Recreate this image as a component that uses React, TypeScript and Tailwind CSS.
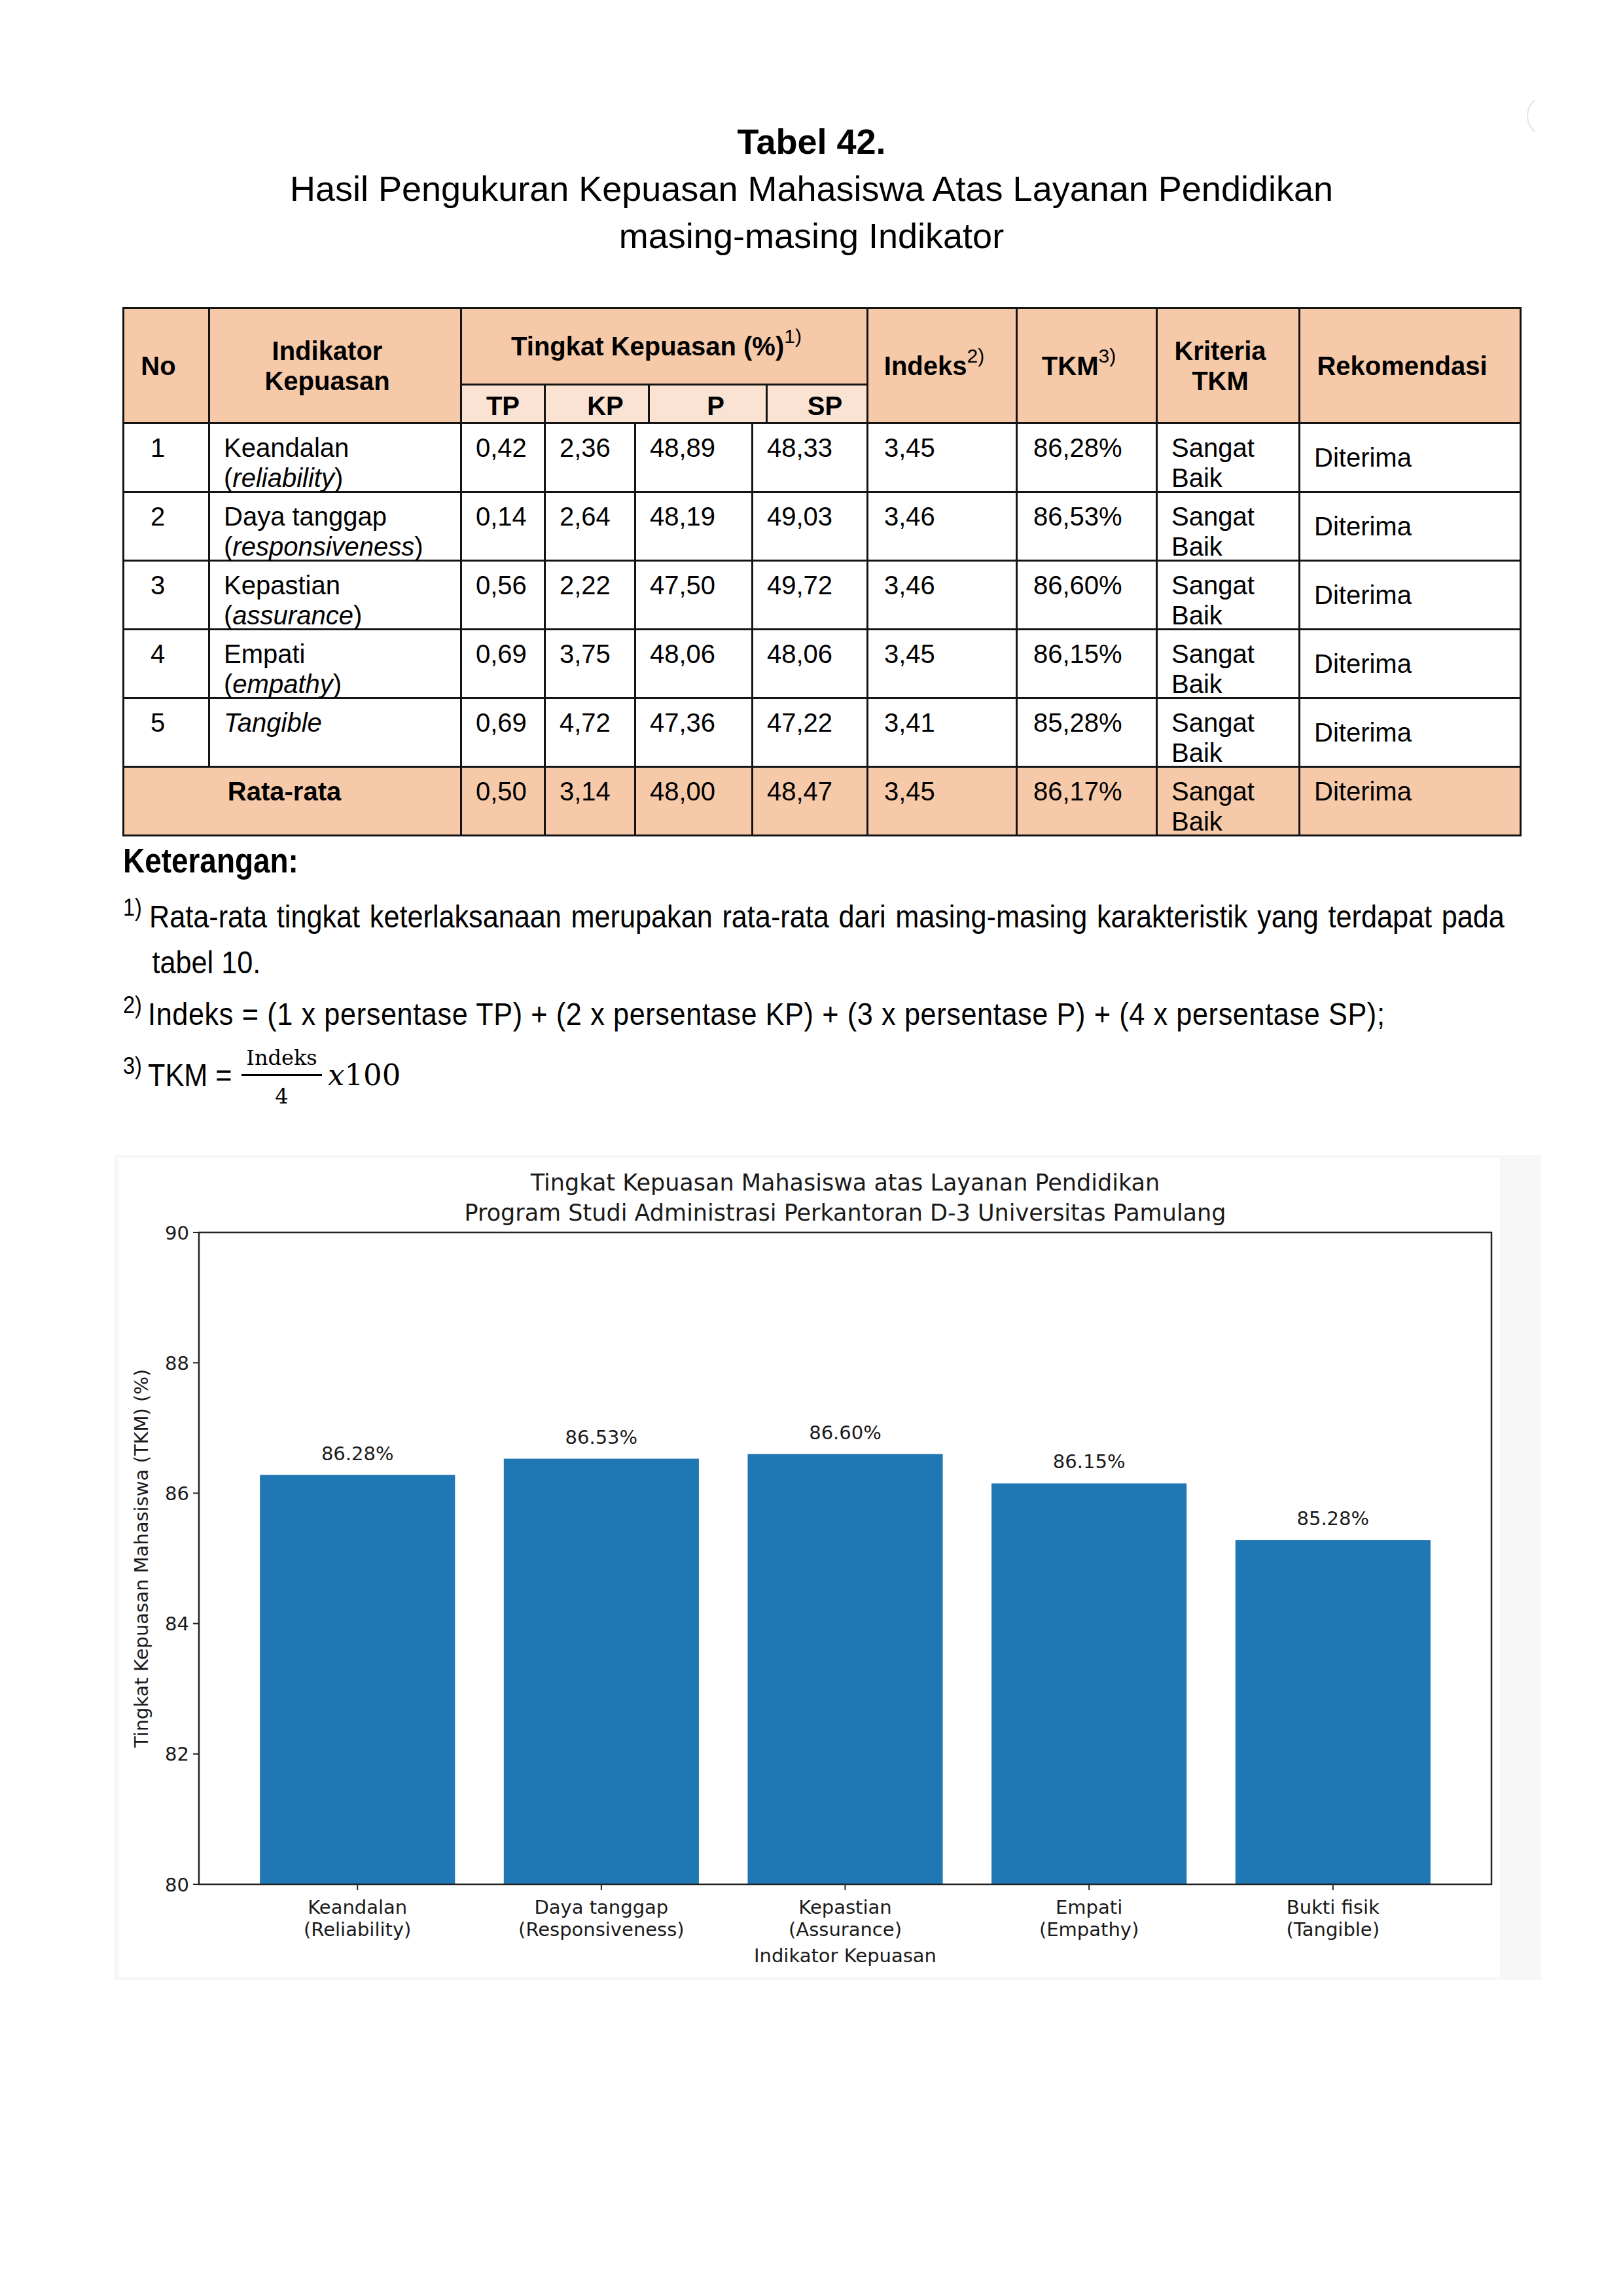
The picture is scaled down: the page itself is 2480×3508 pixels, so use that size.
import React from "react";

type Row = {
  no: string;
  name?: string;
  en: string;
  vals: string[];
  idx: string;
  tkm: string;
};

const rows: Row[] = [
  { no: "1", name: "Keandalan", en: "reliability", vals: ["0,42", "2,36", "48,89", "48,33"], idx: "3,45", tkm: "86,28%" },
  { no: "2", name: "Daya tanggap", en: "responsiveness", vals: ["0,14", "2,64", "48,19", "49,03"], idx: "3,46", tkm: "86,53%" },
  { no: "3", name: "Kepastian", en: "assurance", vals: ["0,56", "2,22", "47,50", "49,72"], idx: "3,46", tkm: "86,60%" },
  { no: "4", name: "Empati", en: "empathy", vals: ["0,69", "3,75", "48,06", "48,06"], idx: "3,45", tkm: "86,15%" },
  { no: "5", en: "Tangible", vals: ["0,69", "4,72", "47,36", "47,22"], idx: "3,41", tkm: "85,28%" },
];

const bars = [
  { label: ["Keandalan", "(Reliability)"], v: 86.28 },
  { label: ["Daya tanggap", "(Responsiveness)"], v: 86.53 },
  { label: ["Kepastian", "(Assurance)"], v: 86.6 },
  { label: ["Empati", "(Empathy)"], v: 86.15 },
  { label: ["Bukti fisik", "(Tangible)"], v: 85.28 },
];

// chart geometry, in svg coords (svg sits at page x 175, y 1765)
const X0 = 129;
const X1 = 2104;
const Y0 = 118;
const Y1 = 1114;
const yOf = (v: number) => Y1 - ((v - 80) * (Y1 - Y0)) / 10;
const step = (X1 - X0) / 5.3;
const cx = (i: number) => X0 + (0.65 + i) * step;

const head = "flex items-center justify-center bg-[#f6c9a9] pr-[24px] text-center";
const sub = "flex items-center justify-center bg-[#fbe3d3] pt-[6px]";
const cell = "bg-white pl-[21px] pt-[13px]";
const avg = "bg-[#f6c9a9] pl-[21px] pt-[13px]";

// the notes are set in a narrow face; squeeze Liberation Sans to get it
const narrow = "origin-left scale-x-[0.9]";

function Chart() {
  return (
    <div className="ml-[175px] mt-[59px] w-[2180px] bg-[#f7f7f7]">
      <svg width={2180} height={1260} className="block font-['DejaVu_Sans',sans-serif]">
        <rect x={6} y={4} width={2111} height={1252} fill="#ffffff" />
        <text x={(X0 + X1) / 2} y={54} textAnchor="middle" fontSize={35} fill="#1a1a1a">
          Tingkat Kepuasan Mahasiswa atas Layanan Pendidikan
        </text>
        <text x={(X0 + X1) / 2} y={100} textAnchor="middle" fontSize={35} fill="#1a1a1a">
          Program Studi Administrasi Perkantoran D-3 Universitas Pamulang
        </text>

        {bars.map((b, i) => (
          <g key={b.label[0]}>
            <rect x={cx(i) - step * 0.4} y={yOf(b.v)} width={step * 0.8} height={Y1 - yOf(b.v)} fill="#1f77b4" />
            <text x={cx(i)} y={yOf(b.v) - 23} textAnchor="middle" fontSize={29} fill="#1a1a1a">
              {b.v.toFixed(2)}%
            </text>
            <line x1={cx(i)} x2={cx(i)} y1={Y1} y2={Y1 + 9} stroke="#222" strokeWidth={2} />
            <text x={cx(i)} y={1159} textAnchor="middle" fontSize={29} fill="#1a1a1a">
              {b.label[0]}
            </text>
            <text x={cx(i)} y={1193} textAnchor="middle" fontSize={29} fill="#1a1a1a">
              {b.label[1]}
            </text>
          </g>
        ))}

        {[80, 82, 84, 86, 88, 90].map((t) => (
          <g key={t}>
            <line x1={X0 - 9} x2={X0} y1={yOf(t)} y2={yOf(t)} stroke="#222" strokeWidth={2} />
            <text x={X0 - 15} y={yOf(t) + 10.5} textAnchor="end" fontSize={29} fill="#1a1a1a">
              {t}
            </text>
          </g>
        ))}

        <rect x={X0} y={Y0} width={X1 - X0} height={Y1 - Y0} fill="none" stroke="#222" strokeWidth={2.5} />

        <text x={(X0 + X1) / 2} y={1233} textAnchor="middle" fontSize={29} fill="#1a1a1a">
          Indikator Kepuasan
        </text>
        <text
          x={51}
          y={(Y0 + Y1) / 2}
          textAnchor="middle"
          fontSize={29}
          fill="#1a1a1a"
          transform={`rotate(-90 51 ${(Y0 + Y1) / 2})`}
        >
          Tingkat Kepuasan Mahasiswa (TKM) (%)
        </text>
      </svg>
    </div>
  );
}

export default function App() {
  return (
    <div className="relative min-h-[3508px] w-[2480px] overflow-hidden bg-white pt-[180px] font-['Liberation_Sans',Arial,sans-serif] text-black">
      {/* faint arc at the top right edge */}
      <div className="absolute left-[2333px] top-[145px] h-[64px] w-[12px] overflow-hidden">
        <div className="h-[64px] w-[64px] rounded-full border-2 border-[#e4e4e4]" />
      </div>

      <div className="text-center text-[54px] leading-[72px]">
        <div className="font-bold">Tabel 42.</div>
        <div>Hasil Pengukuran Kepuasan Mahasiswa Atas Layanan Pendidikan</div>
        <div>masing-masing Indikator</div>
      </div>

      <div className="ml-[187px] mt-[73px] w-[2138px]">
        <div className="grid grid-cols-[128px_382px_125px_156px_177px_151px_225px_211px_215px_335px] grid-rows-[114px_56px] gap-[3px] bg-[#141414] px-[3px] pt-[3px] text-[40px] font-bold leading-[46px]">
          <div className={`row-span-2 ${head}`}>No</div>
          <div className={`row-span-2 ${head}`}>
            Indikator
            <br />
            Kepuasan
          </div>
          <div className={`col-span-4 ${head}`}>
            Tingkat Kepuasan (%)<sup className="font-normal">1)</sup>
          </div>
          <div className={`row-span-2 ${head}`}>
            Indeks<sup className="font-normal">2)</sup>
          </div>
          <div className={`row-span-2 ${head}`}>
            TKM<sup className="font-normal">3)</sup>
          </div>
          <div className={`row-span-2 ${head}`}>
            Kriteria
            <br />
            TKM
          </div>
          <div className={`row-span-2 ${head}`}>Rekomendasi</div>
          <div className={sub}>TP</div>
          <div className={`${sub} pl-[26px]`}>KP</div>
          <div className={`${sub} pl-[24px]`}>P</div>
          <div className={`${sub} pl-[24px]`}>SP</div>
        </div>

        <div className="grid auto-rows-[102px] grid-cols-[128px_382px_125px_135px_176px_173px_225px_211px_215px_335px] gap-[3px] bg-[#141414] p-[3px] text-[40px] leading-[46px]">
          {rows.map((r) => (
            <React.Fragment key={r.no}>
              <div className="bg-white pl-[40px] pt-[13px]">{r.no}</div>
              <div className={cell}>
                {r.name ? (
                  <>
                    {r.name}
                    <br />(<i>{r.en}</i>)
                  </>
                ) : (
                  <i>{r.en}</i>
                )}
              </div>
              {r.vals.map((v, i) => (
                <div key={i} className={cell}>
                  {v}
                </div>
              ))}
              <div className={`${cell} pl-[24px]`}>{r.idx}</div>
              <div className={`${cell} pl-[24px]`}>{r.tkm}</div>
              <div className={cell}>
                Sangat
                <br />
                Baik
              </div>
              <div className="flex items-center bg-white pl-[21px]">Diterima</div>
            </React.Fragment>
          ))}
          <div className="col-span-2 bg-[#f6c9a9] pr-[24px] pt-[13px] text-center font-bold">Rata-rata</div>
          <div className={avg}>0,50</div>
          <div className={avg}>3,14</div>
          <div className={avg}>48,00</div>
          <div className={avg}>48,47</div>
          <div className={`${avg} pl-[24px]`}>3,45</div>
          <div className={`${avg} pl-[24px]`}>86,17%</div>
          <div className={avg}>
            Sangat
            <br />
            Baik
          </div>
          <div className={avg}>Diterima</div>
        </div>
      </div>

      <div className="ml-[188px] w-[2112px] text-[48px]">
        <div className={`mt-[10px] whitespace-nowrap text-[51px] font-bold leading-[56px] ${narrow}`}>Keterangan:</div>

        <div className="mt-[22px] flex leading-[70px]">
          <div className="w-[40px] shrink-0">
            <div className={narrow}>
              <sup>1)</sup>
            </div>
          </div>
          <div className="w-[2071px] shrink-0">
            <div className={`w-[2301px] text-justify [text-align-last:justify] ${narrow}`}>
              Rata-rata tingkat keterlaksanaan merupakan rata-rata dari masing-masing karakteristik yang terdapat pada
            </div>
            <div className={`pl-[5px] ${narrow}`}>tabel 10.</div>
          </div>
        </div>

        <div className="mt-[9px] flex leading-[70px]">
          <div className="w-[38px] shrink-0">
            <div className={narrow}>
              <sup>2)</sup>
            </div>
          </div>
          <div className={`whitespace-nowrap tracking-[0.7px] ${narrow}`}>
            Indeks = (1 x persentase TP) + (2 x persentase KP) + (3 x persentase P) + (4 x persentase SP);
          </div>
        </div>

        <div className="mt-[-6px] flex items-center leading-[56px]">
          <div className="w-[38px] shrink-0">
            <div className={narrow}>
              <sup>3)</sup>
            </div>
          </div>
          <div className="w-[143px] shrink-0">
            <div className={`whitespace-nowrap ${narrow}`}>TKM =</div>
          </div>
          <div className="flex w-[123px] flex-col items-center font-['DejaVu_Serif',serif] text-[32px]">
            <div className="h-[62px] pt-[18px] leading-[38px]">Indeks</div>
            <div className="h-[3px] w-full bg-black" />
            <div className="h-[62px] leading-[62px]">4</div>
          </div>
          <div className="ml-[9px] font-['DejaVu_Serif',serif] text-[45px]">
            <i>x</i>100
          </div>
        </div>
      </div>

      <Chart />
    </div>
  );
}
